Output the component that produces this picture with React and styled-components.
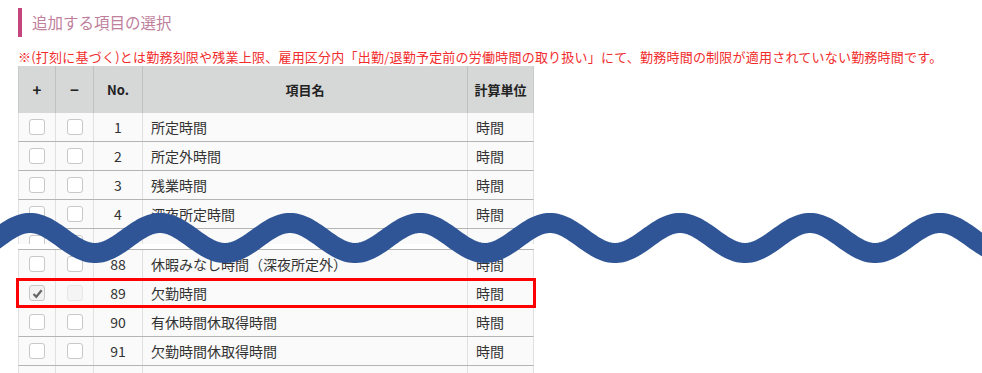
import styled, { createGlobalStyle } from "styled-components";

const GlobalStyle = createGlobalStyle`
  html, body {
    margin: 0;
    padding: 0;
    background: #fff;
  }
  body {
    font-family: "Noto Sans CJK JP", "Noto Sans", sans-serif;
    color: #333;
  }
`;

const COLS = "37px 38px 49px 325px 65px";

const topRows = [
  { no: 1, name: "所定時間" },
  { no: 2, name: "所定外時間" },
  { no: 3, name: "残業時間" },
  { no: 4, name: "深夜所定時間" },
];

const bottomRows = [
  { no: 88, name: "休暇みなし時間（深夜所定外）" },
  { no: 89, name: "欠勤時間", checked: true, marked: true },
  { no: 90, name: "有休時間休取得時間" },
  { no: 91, name: "欠勤時間休取得時間" },
];

// wave that marks the rows left out of the screenshot
function wavePath() {
  let d = "";
  for (let x = -20; x <= 1002; x += 2) {
    const y = 38 - 15 * Math.cos((2 * Math.PI * (x - 30)) / 130);
    d += (x === -20 ? "M" : "L") + x + " " + y.toFixed(2) + " ";
  }
  return d;
}

export default function App() {
  return (
    <Page>
      <GlobalStyle />
      <Heading>追加する項目の選択</Heading>
      <Note>
        ※(打刻に基づく)とは勤務刻限や残業上限、雇用区分内「出勤/退勤予定前の労働時間の取り扱い」にて、勤務時間の制限が適用されていない勤務時間です。
      </Note>
      <Block>
        <HeadRow>
          <HeadCell big>+</HeadCell>
          <HeadCell big>−</HeadCell>
          <HeadCell>No.</HeadCell>
          <HeadCell>項目名</HeadCell>
          <HeadCell last>計算単位</HeadCell>
        </HeadRow>
        {topRows.map((r) => (
          <ItemRow key={r.no} {...r} />
        ))}
        <CutRow height={15}>
          <Cell><Box /></Cell>
          <Cell><Box /></Cell>
          <Cell />
          <Cell />
          <Cell last />
        </CutRow>
      </Block>
      <Block second>
        {bottomRows.map((r) => (
          <ItemRow key={r.no} {...r} />
        ))}
        <CutRow height={8}>
          <Cell />
          <Cell />
          <Cell />
          <Cell />
          <Cell last />
        </CutRow>
      </Block>
      <Wave width="982" height="80" viewBox="0 0 982 80">
        <path d={wavePath()} fill="none" stroke="#2f5597" strokeWidth="20" />
      </Wave>
    </Page>
  );
}

function ItemRow({ no, name, checked, marked }) {
  return (
    <Row marked={marked}>
      <Cell>
        <Box checked={checked}>
          {checked && (
            <svg width="11" height="11" viewBox="0 0 11 11">
              <path d="M1.5 6 L4.3 8.8 L9.6 2.2" fill="none" stroke="#666" strokeWidth="2.2" />
            </svg>
          )}
        </Box>
      </Cell>
      <Cell>
        <Box disabled={checked} />
      </Cell>
      <Cell>{no}</Cell>
      <Cell left>{name}</Cell>
      <Cell left last>時間</Cell>
    </Row>
  );
}

const Page = styled.div`
  position: relative;
  padding: 8px 0 0 18px;
  height: 365px;
  overflow: hidden;
`;

const Heading = styled.h2`
  margin: 0;
  height: 29px;
  line-height: 29px;
  border-left: 4px solid #c4467d;
  padding-left: 10px;
  font-size: 15.5px;
  font-weight: normal;
  color: #c07f9c;
`;

const Note = styled.p`
  margin: 10px 0 0;
  height: 19px;
  line-height: 19px;
  font-size: 13px;
  color: #f12d2d;
  white-space: nowrap;
  letter-spacing: 0.22px;
`;

const Block = styled.div`
  width: 516px;
  margin-top: ${(p) => (p.second ? "5px" : "0")};
  border-top: ${(p) => (p.second ? "1px solid #b4b4b4" : "none")};
`;

const HeadRow = styled.div`
  display: grid;
  grid-template-columns: ${COLS};
  height: 47px;
  background: #d6d8d8;
  border-left: 1px solid #c9cbcb;
  border-right: 1px solid #c9cbcb;
`;

const HeadCell = styled.div`
  display: flex;
  align-items: center;
  justify-content: center;
  border-right: ${(p) => (p.last ? "none" : "1px solid #bfc1c1")};
  font-size: ${(p) => (p.big ? "15px" : "13px")};
  font-weight: bold;
  color: #222;
`;

const Row = styled.div`
  position: relative;
  display: grid;
  grid-template-columns: ${COLS};
  height: 29px;
  background: #fafafa;
  border-left: 1px solid #e0e0e0;
  border-right: 1px solid #e0e0e0;
  border-bottom: 1px solid #b4b4b4;
  box-sizing: border-box;

  &::after {
    content: "";
    display: ${(p) => (p.marked ? "block" : "none")};
    position: absolute;
    top: -1px;
    bottom: -1px;
    left: -3px;
    right: -3px;
    border: 3px solid #ff0000;
    pointer-events: none;
  }
`;

const CutRow = styled(Row)`
  height: ${(p) => p.height}px;
  border-bottom: none;
  overflow: hidden;
  align-items: start;
`;

const Cell = styled.div`
  display: flex;
  align-items: center;
  justify-content: ${(p) => (p.left ? "flex-start" : "center")};
  padding-left: ${(p) => (p.left ? "8px" : "0")};
  height: 28px;
  border-right: ${(p) => (p.last ? "none" : "1px solid #e0e0e0")};
  font-size: 14px;
  color: #333;
  white-space: nowrap;
`;

const Box = styled.span`
  display: flex;
  align-items: center;
  justify-content: center;
  width: 16px;
  height: 16px;
  box-sizing: border-box;
  border: 1px solid ${(p) => (p.disabled ? "#e6e6e6" : "#c8c8c8")};
  border-radius: 3px;
  background: ${(p) => (p.disabled ? "#f4f4f4" : p.checked ? "#f1f1f1" : "#fff")};
`;

const Wave = styled.svg`
  position: absolute;
  left: 0;
  top: 200px;
`;
